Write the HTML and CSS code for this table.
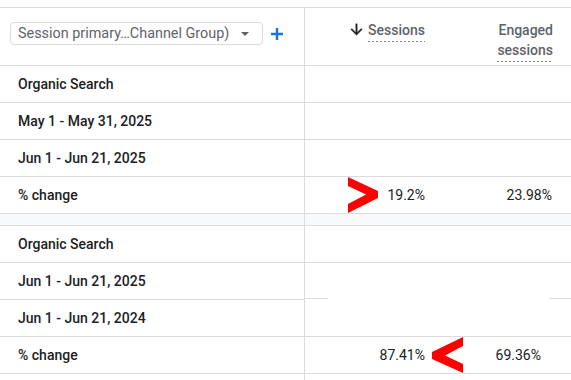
FILE: index.html
```html
<!DOCTYPE html>
<html lang="en">
<head>
<meta charset="utf-8">
<title>Report table</title>
<link rel="stylesheet" href="styles.css">
</head>
<body>
<div class="table">
  <div class="row head">
    <div class="cell dim head-dim">
      <div class="select">
        <span class="select-text">Session primary…Channel Group)</span>
        <svg class="caret" width="8" height="4" viewBox="0 0 8 4"><path d="M0 0h8L4 4z" fill="#5f6368"/></svg>
      </div>
      <svg class="plus" width="12" height="12" viewBox="0 0 12 12"><path d="M6 0v12M0 6h12" stroke="#1a73e8" stroke-width="2.4"/></svg>
    </div>
    <div class="cell num hcell">
      <svg class="arrow" width="17" height="17" viewBox="0 0 24 24"><path d="M20 12l-1.41-1.41L13 16.17V4h-2v12.17l-5.58-5.59L4 12l8 8 8-8z" fill="#202124" stroke="#202124" stroke-width="0.6"/></svg>
      <span class="u">Sessions</span>
    </div>
    <div class="cell num hcell c3"><span class="u">Engaged<br>sessions</span></div>
  </div>

  <div class="row">
    <div class="cell dim">Organic Search</div><div class="cell num"></div><div class="cell num c3"></div>
  </div>
  <div class="row">
    <div class="cell dim">May 1 - May 31, 2025</div><div class="cell num"></div><div class="cell num c3"></div>
  </div>
  <div class="row">
    <div class="cell dim">Jun 1 - Jun 21, 2025</div><div class="cell num"></div><div class="cell num c3"></div>
  </div>
  <div class="row">
    <div class="cell dim">% change</div>
    <div class="cell num"><svg class="mark mark-gt" width="30" height="36" viewBox="0 0 30 36"><polygon points="0,0 30,14 30,21 0,36 0,27 18,17.5 0,9" fill="#ff0000"/></svg>19.2%</div>
    <div class="cell num c3">23.98%</div>
  </div>

  <div class="row band"><div class="cell dim"></div><div class="cell"></div><div class="cell"></div></div>

  <div class="row">
    <div class="cell dim">Organic Search</div><div class="cell num"></div><div class="cell num c3b"></div>
  </div>
  <div class="row">
    <div class="cell dim">Jun 1 - Jun 21, 2025</div><div class="cell num part-l"></div><div class="cell num c3b part-r"></div>
  </div>
  <div class="row">
    <div class="cell dim">Jun 1 - Jun 21, 2024</div><div class="cell num"></div><div class="cell num c3b"></div>
  </div>
  <div class="row">
    <div class="cell dim">% change</div>
    <div class="cell num">87.41%<svg class="mark mark-lt" width="31" height="36" viewBox="0 0 31 36"><polygon points="31,0 31,9 13,18.5 31,27 31,36 0,22 0,15" fill="#ff0000"/></svg></div>
    <div class="cell num c3b">69.36%</div>
  </div>
  <div class="row tail"><div class="cell dim"></div><div class="cell"></div><div class="cell"></div></div>
</div>
</body>
</html>
```

FILE: styles.css
```css
html, body {
  margin: 0;
  padding: 0;
  background: #ffffff;
}
body {
  font-family: Roboto, "Noto Sans", "Liberation Sans", sans-serif;
  font-size: 14px;
  color: #202124;
}
.table {
  margin-top: 7px;
  border-top: 1px solid #dadce0;
}
.row {
  display: grid;
  grid-template-columns: 305px 136px 130px;
  height: 37px;
}
.row.head {
  height: 58px;
}
.cell {
  box-sizing: border-box;
  border-bottom: 1px solid #dadce0;
  position: relative;
}
.cell.dim {
  border-right: 1px solid #dadce0;
  padding-left: 18px;
  display: flex;
  align-items: center;
  font-weight: 500;
}
.cell.num {
  display: flex;
  align-items: center;
  justify-content: flex-end;
  padding-right: 16px;
}
.cell.c3 {
  padding-right: 19px;
}
.cell.c3b {
  padding-right: 30px;
}
.head-dim {
  align-items: flex-start !important;
  padding-left: 10px !important;
  padding-top: 14px;
  gap: 8px;
}
.select {
  box-sizing: border-box;
  width: 253px;
  height: 23px;
  border: 1px solid #dadce0;
  border-radius: 4px;
  display: flex;
  align-items: center;
  padding-left: 7px;
  color: #5f6368;
  font-weight: 400;
  font-size: 14.4px;
}
.select-text {
  flex: 1;
  white-space: nowrap;
}
.caret {
  margin-right: 13px;
  margin-top: 1px;
}
.plus {
  margin-top: 6px;
}
.hcell {
  align-items: flex-start !important;
  padding-top: 12px;
  line-height: 20px;
  color: #5f6368;
  font-weight: 500;
  text-align: right;
}
.hcell.c3 {
  padding-right: 18px;
}
.arrow {
  margin-top: 1px;
  margin-right: 3px;
}
.u {
  padding-bottom: 2px;
  background-image: repeating-linear-gradient(to right, #80868b 0 2px, transparent 2px 4px);
  background-size: 100% 1px;
  background-position: left bottom;
  background-repeat: no-repeat;
  -webkit-box-decoration-break: clone;
  box-decoration-break: clone;
}
.mark {
  position: absolute;
  top: 0;
}
.mark-gt {
  left: 43px;
}
.mark-lt {
  left: 127px;
}
.band .cell {
  background: #f8f9fa;
}
.row.band {
  height: 12px;
}
.part-l {
  border-bottom-color: transparent;
  background: linear-gradient(#dadce0, #dadce0) left bottom / 23px 1px no-repeat;
}
.part-r {
  border-bottom-color: transparent;
  background: linear-gradient(#dadce0, #dadce0) right bottom / 21px 1px no-repeat;
}
.row.tail {
  height: 10px;
}
.tail .cell {
  border-bottom: none;
}
```
